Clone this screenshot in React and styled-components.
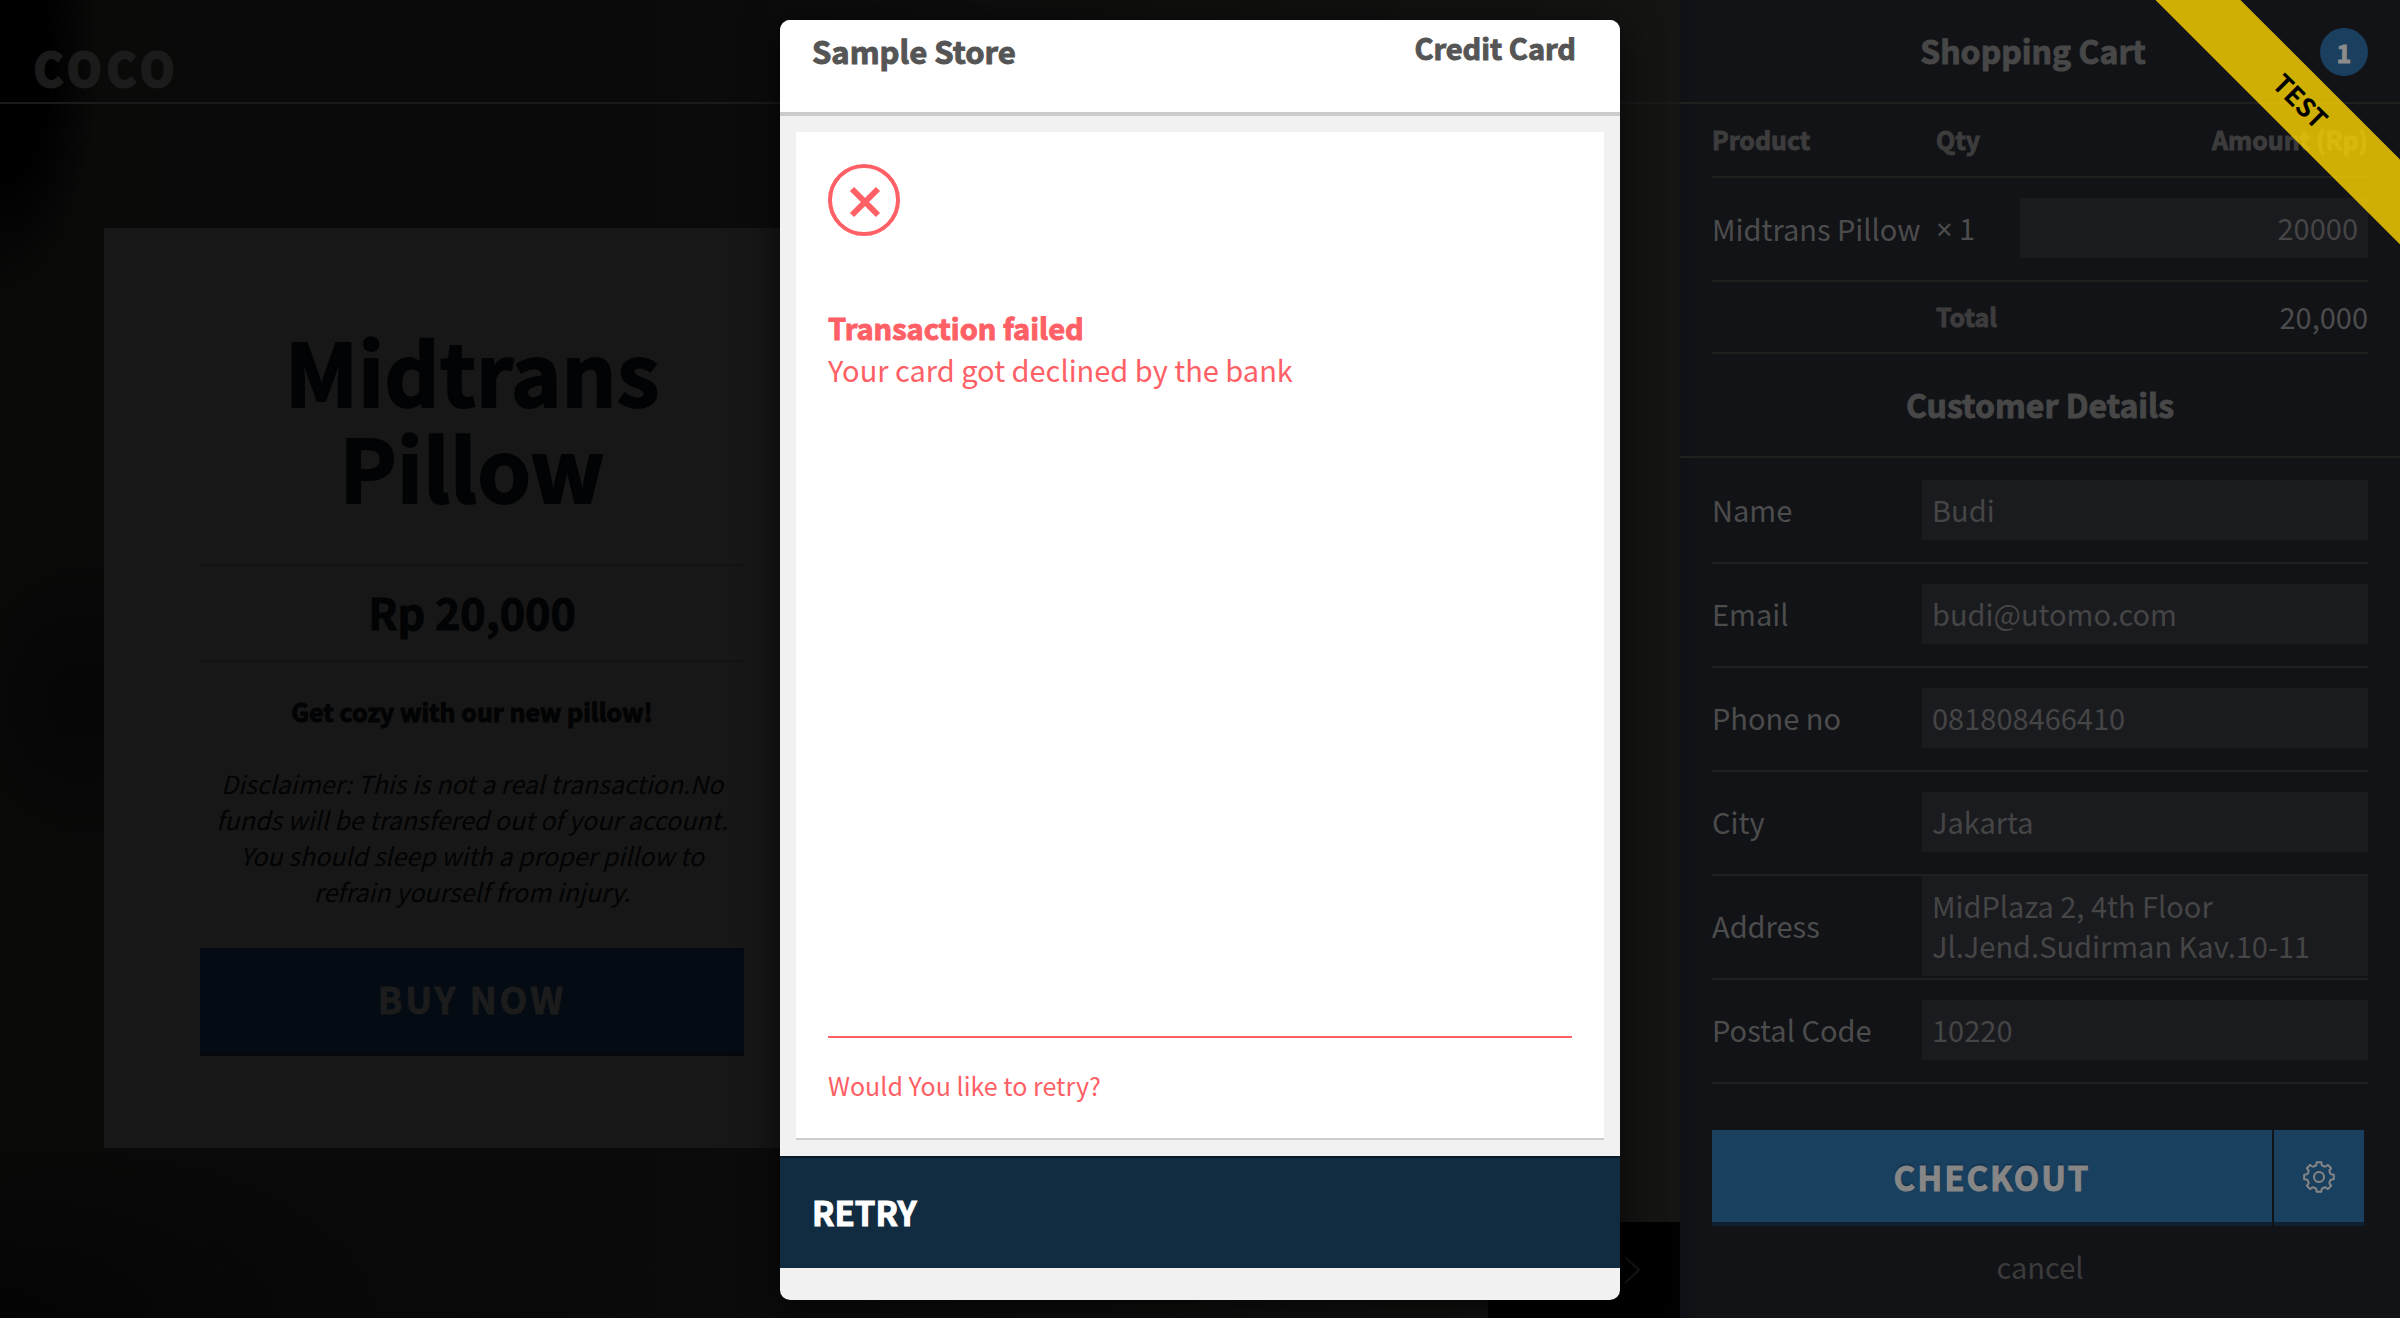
import React from "react";
import styled, { createGlobalStyle, css } from "styled-components";

const font = `"Noto Sans CJK SC", "Noto Sans", sans-serif`;
const red = "#ff6066";

const heavy = css`
  font-weight: 700;
  -webkit-text-stroke: 1px currentColor;
`;

const GlobalStyle = createGlobalStyle`
  *, *::before, *::after { box-sizing: border-box; }
  body { margin: 0; background: #090909; font-family: ${font}; }
  h1, h2, h3, p { margin: 0; }
  button, input, textarea { font-family: inherit; border: 0; margin: 0; border-radius: 0; }
  button { cursor: pointer; padding: 0; }
`;

const Page = styled.div`
  position: relative;
  display: grid;
  grid-template-columns: minmax(0, 1fr) 720px;
  min-height: 100vh;
  overflow: hidden;
`;

const Shop = styled.main`
  position: relative;
  display: flex;
  flex-direction: column;
  background:
    radial-gradient(ellipse 100px 240px at 0 60px, #000 50%, transparent 100%),
    radial-gradient(ellipse 140px 160px at 80px 700px, #050505 0%, transparent 100%),
    radial-gradient(ellipse 400px 200px at 0 1318px, #040404 0%, transparent 100%),
    linear-gradient(90deg, #0a0a09 0%, #090909 30%, #0f0f0e 70%, #151514 100%);
`;

const ShopHeader = styled.header`
  height: 104px;
  padding: 32px 34px 0;
  border-bottom: 2px solid #1a1a1a;
`;

const Logo = styled.h1`
  font-size: 44px;
  line-height: 70px;
  font-weight: 700;
  letter-spacing: 6px;
  color: #1b1b1b;
  -webkit-text-stroke: 3px currentColor;
`;

const ProductCard = styled.section`
  width: 736px;
  margin: 124px 0 0 104px;
  padding: 94px 96px 92px;
  background: #171717;
  color: #020304;
  text-align: center;
`;

const ProductTitle = styled.h2`
  ${heavy}
  -webkit-text-stroke-width: 2px;
  font-size: 86px;
  line-height: 96px;
  padding-bottom: 50px;
`;

const Price = styled.p`
  ${heavy}
  padding-bottom: 4px;
  border-top: 2px solid #131313;
  border-bottom: 2px solid #131313;
  font-size: 43px;
  line-height: 90px;
`;

const Tagline = styled.p`
  ${heavy}
  margin-top: 31px;
  font-size: 25px;
  line-height: 36px;
`;

const Disclaimer = styled.p`
  margin-top: 36px;
  font-size: 25px;
  line-height: 36px;
  font-style: italic;
`;

const BuyButton = styled.button`
  ${heavy}
  width: 100%;
  height: 108px;
  margin-top: 39px;
  padding-bottom: 4px;
  background: #040b12;
  border-bottom: 4px solid #05090b;
  color: #1c1c1c;
  font-size: 36px;
  letter-spacing: 3px;
`;

const SlideNav = styled.nav`
  position: absolute;
  right: 0;
  bottom: 0;
  display: flex;
  background: #010101;
`;

const SlideButton = styled.button`
  display: grid;
  place-items: center;
  width: 96px;
  height: 96px;
  background: transparent;
  color: #161616;
`;

const Cart = styled.aside`
  display: flex;
  flex-direction: column;
  background: linear-gradient(90deg, #0f1015 0, #121317 16px);
  color: #4c4c4c;
  font-size: 29px;
`;

const CartHeading = styled.header`
  display: flex;
  align-items: center;
  height: 104px;
  padding: 0 32px;
  border-bottom: 2px solid #20211f;
`;

const Heading = styled.h2`
  ${heavy}
  flex: 1;
  padding-bottom: 2px;
  font-size: 32px;
  line-height: 48px;
  color: #474747;
  text-align: center;
  ${(p) => p.$besideBadge && css`padding-left: 34px;`}
`;

const Badge = styled.span`
  display: grid;
  place-items: center;
  width: 48px;
  height: 48px;
  margin-top: 2px;
  border-radius: 50%;
  background: #1b3f5f;
  color: #8c8c8c;
  font-size: 25px;
  line-height: 46px;
  ${heavy}
`;

const CartTable = styled.table`
  margin: 0 32px;
  border-collapse: separate;
  border-spacing: 0;
  table-layout: fixed;
  text-align: left;
`;

const Col = styled.col`
  width: ${(p) => p.$w};
`;

const Row = styled.tr`
  height: ${(p) => p.$h}px;
`;

const cell = css`
  padding: 0 0 2px;
  border-bottom: 2px solid #20211f;
  line-height: 40px;
  white-space: nowrap;
  text-align: ${(p) => (p.$right ? "right" : "left")};
`;

const Cell = styled.td`
  ${cell}
`;

const HeadCell = styled.th`
  ${cell}
  ${heavy}
  font-size: 25px;
  color: #3c3c3c;
`;

const Times = styled.span`
  font-family: "Noto Sans", sans-serif;
`;

const field = css`
  display: block;
  width: 100%;
  padding: 0 10px 2px;
  background: #1a1b1f;
  color: #454545;
  font-size: 29px;
  line-height: 40px;
  outline: 0;
`;

const Input = styled.input`
  ${field}
  height: 60px;
  text-align: ${(p) => (p.$right ? "right" : "left")};
`;

const AddressBox = styled.textarea`
  ${field}
  height: 100px;
  padding: 9px 10px;
  resize: none;
  overflow: hidden;
`;

const Form = styled.form`
  padding: 2px 32px 0;
`;

const Field = styled.div`
  display: grid;
  grid-template-columns: 210px minmax(0, 1fr);
  align-items: center;
  height: 104px;
  padding-bottom: 2px;
  border-bottom: 2px solid #20211f;
  line-height: 40px;
`;

const FieldLabel = styled.label`
  padding-bottom: 2px;
`;

const Actions = styled.div`
  display: grid;
  grid-template-columns: minmax(0, 1fr) 90px;
  gap: 2px;
  margin: 46px 4px 0 0;
`;

const CheckoutButton = styled.button`
  ${heavy}
  display: grid;
  place-items: center;
  height: 96px;
  padding-top: 2px;
  background: #1a4060;
  border-bottom: 4px solid #0f2131;
  color: #868686;
  font-size: 33px;
  line-height: 48px;
  letter-spacing: 2px;
  text-shadow: 0 -2px 2px rgba(0, 0, 0, 0.3);
`;

const CancelButton = styled.button`
  display: block;
  margin: 20px auto 0;
  background: transparent;
  color: #3b3b3b;
  font-size: 29px;
  line-height: 40px;
`;

const RibbonCorner = styled.div`
  position: absolute;
  top: 0;
  right: 0;
  width: 244px;
  height: 244px;
  overflow: hidden;
  pointer-events: none;
`;

const Ribbon = styled.div`
  position: absolute;
  top: 71px;
  right: -99px;
  width: 400px;
  height: 60px;
  padding-left: 2px;
  transform: rotate(45deg);
  background: rgba(255, 215, 0, 0.8);
  color: #000;
  font-size: 26px;
  line-height: 56px;
  font-weight: 700;
  text-align: center;
`;

const Overlay = styled.div`
  position: absolute;
  inset: 0;
  display: flex;
  justify-content: center;
  padding: 20px 0 18px;
  pointer-events: none;
`;

const Modal = styled.section`
  display: flex;
  flex-direction: column;
  width: 840px;
  border-radius: 10px;
  overflow: hidden;
  background: #f1f1f1;
  box-shadow: 0 8px 40px rgba(0, 0, 0, 0.7);
  pointer-events: auto;
`;

const ModalHeader = styled.header`
  display: flex;
  justify-content: space-between;
  align-items: flex-start;
  height: 96px;
  padding: 6px 44px 0 32px;
  background: #fff;
  border-bottom: 4px solid #ccc;
  color: #555;
`;

const StoreName = styled.h2`
  ${heavy}
  font-size: 31px;
  line-height: 50px;
`;

const Method = styled.h3`
  ${heavy}
  font-size: 29px;
  line-height: 42px;
`;

const Panel = styled.div`
  flex: 1;
  display: flex;
  flex-direction: column;
  margin: 16px;
  padding: 32px 32px 20px;
  background: #fff;
  border-bottom: 2px solid #ccc;
  color: ${red};
`;

const StatusIcon = styled.svg`
  display: block;
  width: 72px;
  height: 72px;
`;

const Message = styled.div`
  flex: 1;
  margin-top: 70px;
  font-size: 29px;
  line-height: 42px;
`;

const MessageTitle = styled.h3`
  ${heavy}
  font-size: 29px;
  line-height: 42px;
`;

const RetryPrompt = styled.p`
  padding: 24px 0 10px;
  border-top: 2px solid ${red};
  font-size: 25px;
  line-height: 46px;
`;

const RetryButton = styled.button`
  ${heavy}
  height: 112px;
  margin-bottom: 32px;
  padding: 0 32px 2px;
  background: #112c40;
  border-top: 2px solid #081a27;
  color: #fff;
  font-size: 33px;
  line-height: 48px;
  text-align: left;
`;

const fields = [
  ["name", "Name", "Budi"],
  ["email", "Email", "budi@utomo.com"],
  ["phone", "Phone no", "081808466410"],
  ["city", "City", "Jakarta"],
  ["address", "Address", "MidPlaza 2, 4th Floor\nJl.Jend.Sudirman Kav.10-11"],
  ["postal", "Postal Code", "10220"],
];

function gearPath(cx, cy, teeth, inner, outer) {
  const step = (Math.PI * 2) / teeth;
  const at = (r, a) => `${(cx + r * Math.sin(a)).toFixed(2)} ${(cy - r * Math.cos(a)).toFixed(2)}`;
  let d = "";
  for (let i = 0; i < teeth; i++) {
    const a = i * step;
    d += `${i ? "L" : "M"}${at(outer, a - step * 0.2)}L${at(outer, a + step * 0.2)}`;
    d += `Q${at(inner, a + step * 0.26)} ${at(inner, a + step * 0.4)}`;
    d += `L${at(inner, a + step * 0.6)}Q${at(inner, a + step * 0.74)} ${at(outer, a + step * 0.8)}`;
  }
  return d + "Z";
}

function Gear() {
  return (
    <svg width="32" height="32" viewBox="0 0 32 32" fill="none" stroke="currentColor" strokeWidth="2" strokeLinejoin="round" aria-hidden="true">
      <path d={gearPath(16, 16, 8, 11.8, 15)} />
      <circle cx="16" cy="16" r="5" />
    </svg>
  );
}

export default function App() {
  return (
    <>
      <GlobalStyle />
      <Page>
        <Shop>
          <ShopHeader>
            <Logo>COCO</Logo>
          </ShopHeader>
          <ProductCard>
            <ProductTitle>Midtrans Pillow</ProductTitle>
            <Price>Rp 20,000</Price>
            <Tagline>Get cozy with our new pillow!</Tagline>
            <Disclaimer>
              Disclaimer: This is not a real transaction.No funds will be transfered out of your
              account. You should sleep with a proper pillow to refrain yourself from injury.
            </Disclaimer>
            <BuyButton type="button">BUY NOW</BuyButton>
          </ProductCard>
          <SlideNav aria-label="Slides">
            <SlideButton type="button" aria-label="Previous">
              <svg width="20" height="32" viewBox="0 0 20 32" fill="none" stroke="currentColor" strokeWidth="2" aria-hidden="true">
                <path d="M17 3 3 16l14 13" />
              </svg>
            </SlideButton>
            <SlideButton type="button" aria-label="Next">
              <svg width="20" height="32" viewBox="0 0 20 32" fill="none" stroke="currentColor" strokeWidth="2" aria-hidden="true">
                <path d="M3 3l14 13L3 29" />
              </svg>
            </SlideButton>
          </SlideNav>
        </Shop>

        <Cart>
          <CartHeading>
            <Heading $besideBadge>Shopping Cart</Heading>
            <Badge>1</Badge>
          </CartHeading>
          <CartTable>
            <colgroup>
              <Col $w="224px" />
              <Col $w="84px" />
              <Col $w="auto" />
            </colgroup>
            <thead>
              <Row $h={74}>
                <HeadCell scope="col">Product</HeadCell>
                <HeadCell scope="col">Qty</HeadCell>
                <HeadCell scope="col" $right>Amount (Rp)</HeadCell>
              </Row>
            </thead>
            <tbody>
              <Row $h={104}>
                <Cell>Midtrans Pillow</Cell>
                <Cell><Times>×</Times> 1</Cell>
                <Cell>
                  <Input $right aria-label="Amount (Rp)" defaultValue="20000" />
                </Cell>
              </Row>
              <Row $h={72}>
                <Cell />
                <HeadCell scope="row">Total</HeadCell>
                <Cell $right>20,000</Cell>
              </Row>
            </tbody>
          </CartTable>
          <CartHeading>
            <Heading>Customer Details</Heading>
          </CartHeading>
          <Form onSubmit={(e) => e.preventDefault()}>
            {fields.map(([id, label, value]) => (
              <Field key={id}>
                <FieldLabel htmlFor={id}>{label}</FieldLabel>
                {id === "address" ? (
                  <AddressBox id={id} defaultValue={value} />
                ) : (
                  <Input id={id} defaultValue={value} />
                )}
              </Field>
            ))}
            <Actions>
              <CheckoutButton type="submit">CHECKOUT</CheckoutButton>
              <CheckoutButton type="button" aria-label="Settings">
                <Gear />
              </CheckoutButton>
            </Actions>
            <CancelButton type="button">cancel</CancelButton>
          </Form>
        </Cart>

        <Overlay>
          <Modal role="dialog" aria-labelledby="store-name">
            <ModalHeader>
              <StoreName id="store-name">Sample Store</StoreName>
              <Method>Credit Card</Method>
            </ModalHeader>
            <Panel>
              <StatusIcon viewBox="0 0 72 72" fill="none" stroke="currentColor" aria-hidden="true">
                <circle cx="36" cy="36" r="34" strokeWidth="4" />
                <path d="M24 25 50 51M50 25 24 51" strokeWidth="6" />
              </StatusIcon>
              <Message>
                <MessageTitle>Transaction failed</MessageTitle>
                <p>Your card got declined by the bank</p>
              </Message>
              <RetryPrompt>Would You like to retry?</RetryPrompt>
            </Panel>
            <RetryButton type="button">RETRY</RetryButton>
          </Modal>
        </Overlay>

        <RibbonCorner>
          <Ribbon>TEST</Ribbon>
        </RibbonCorner>
      </Page>
    </>
  );
}
